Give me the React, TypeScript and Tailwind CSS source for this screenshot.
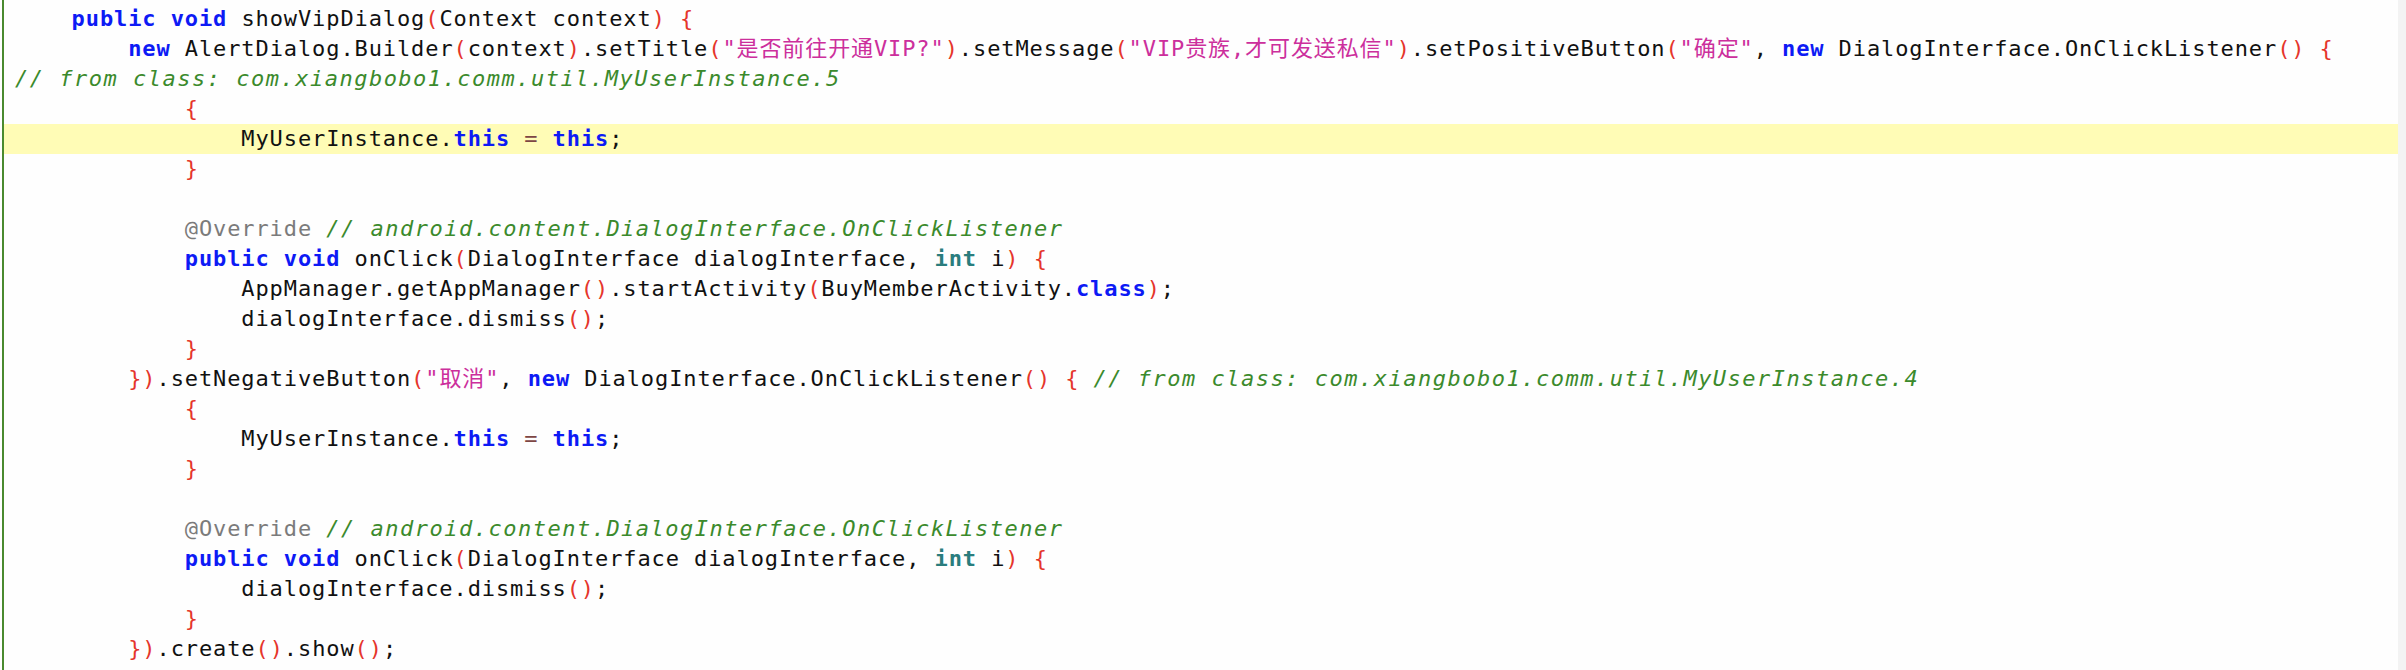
const lines = [
  `    public void showVipDialog(Context context) {`,
  `        new AlertDialog.Builder(context).setTitle("是否前往开通VIP?").setMessage("VIP贵族,才可发送私信").setPositiveButton("确定", new DialogInterface.OnClickListener() {`,
  `// from class: com.xiangbobo1.comm.util.MyUserInstance.5`,
  `            {`,
  `                MyUserInstance.this = this;`,
  `            }`,
  ``,
  `            @Override // android.content.DialogInterface.OnClickListener`,
  `            public void onClick(DialogInterface dialogInterface, int i) {`,
  `                AppManager.getAppManager().startActivity(BuyMemberActivity.class);`,
  `                dialogInterface.dismiss();`,
  `            }`,
  `        }).setNegativeButton("取消", new DialogInterface.OnClickListener() { // from class: com.xiangbobo1.comm.util.MyUserInstance.4`,
  `            {`,
  `                MyUserInstance.this = this;`,
  `            }`,
  ``,
  `            @Override // android.content.DialogInterface.OnClickListener`,
  `            public void onClick(DialogInterface dialogInterface, int i) {`,
  `                dialogInterface.dismiss();`,
  `            }`,
  `        }).create().show();`,
  `    }`,
];

const ACTIVE_LINE = 4;

const keywords = new Set(["public", "void", "new", "this", "class"]);
const types = new Set(["int"]);

type Token = { kind: string; text: string };

// tiny java highlighter, good enough for this snippet
function tokenize(line: string): Token[] {
  const out: Token[] = [];
  const re = /(\/\/.*$)|("(?:[^"\\]|\\.)*")|(@\w+)|([A-Za-z_]\w*)|([(){}[\]])|(=)|(\s+)|(.)/g;
  let m: RegExpExecArray | null;
  while ((m = re.exec(line))) {
    if (m[1]) out.push({ kind: "comment", text: m[1] });
    else if (m[2]) out.push({ kind: "string", text: m[2] });
    else if (m[3]) out.push({ kind: "annotation", text: m[3] });
    else if (m[4]) {
      const w = m[4];
      out.push({ kind: keywords.has(w) ? "keyword" : types.has(w) ? "type" : "plain", text: w });
    } else if (m[5]) out.push({ kind: "sep", text: m[5] });
    else if (m[6]) out.push({ kind: "op", text: m[6] });
    else out.push({ kind: "plain", text: m[0] });
  }
  return out;
}

const kindClass: Record<string, string> = {
  comment: "italic tracking-[1.5px] text-[#3b8a2c]",
  string: "text-[#cc2f9c]",
  annotation: "text-[#7b7b7b]",
  keyword: "font-bold text-[#0d1af5]",
  type: "font-bold text-[#2a7d7d]",
  sep: "text-[#e5352b]",
  op: "text-[#7d4644]",
  plain: "text-[#111111]",
};

function CodeLine({ text, active }: { text: string; active: boolean }) {
  return (
    <div className={`h-[30px] leading-[30px] whitespace-pre pl-[11px] ${active ? "bg-[#fffcb6]" : ""}`}>
      {tokenize(text).map((t, i) => (
        <span key={i} className={kindClass[t.kind]}>
          {t.text}
        </span>
      ))}
    </div>
  );
}

export default function App() {
  return (
    <div className="flex w-[2406px] h-[670px] overflow-hidden bg-[#fefefe] pl-[2px]">
      <div className="flex-1 border-l-2 border-[#4a8a2f] pt-[4px] font-['DejaVu_Sans_Mono','Noto_Sans_CJK_SC',monospace] text-[22px] tracking-[0.9px]">
        {lines.map((l, i) => (
          <CodeLine key={i} text={l} active={i === ACTIVE_LINE} />
        ))}
      </div>
      <div className="w-[8px] bg-[#f3f3f3]" />
    </div>
  );
}
